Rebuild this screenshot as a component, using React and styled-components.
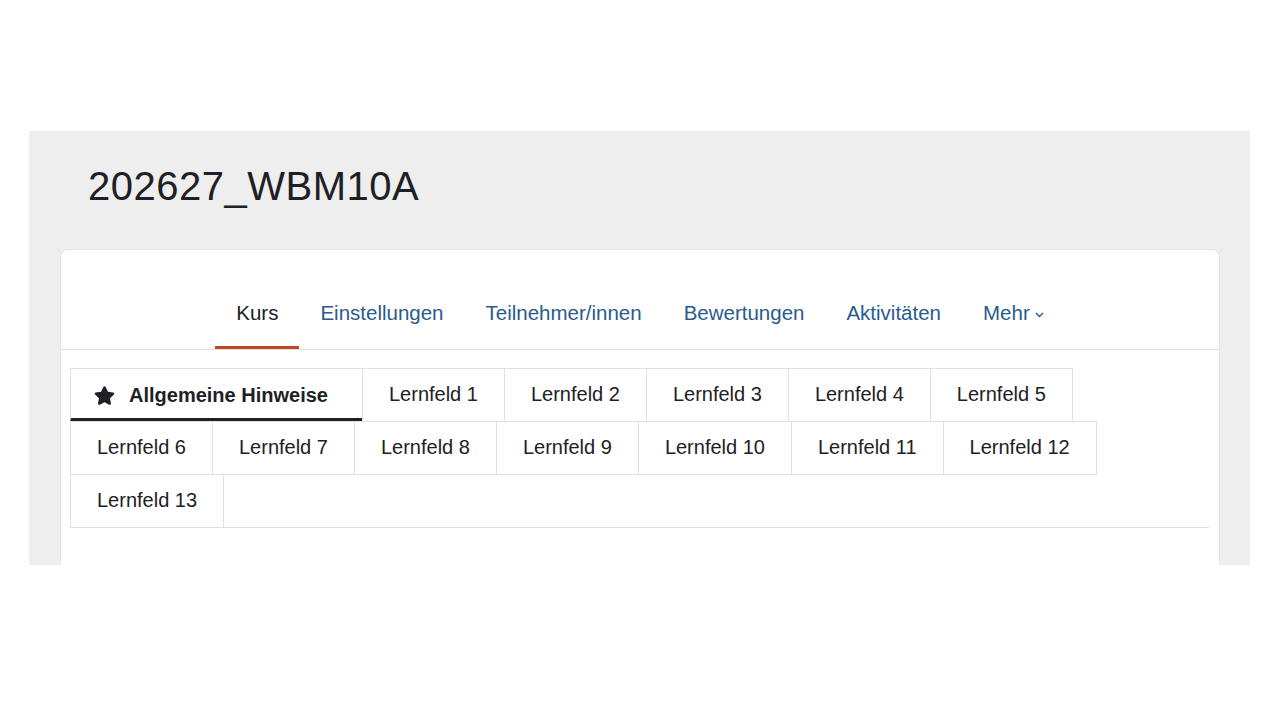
import React from 'react';
import styled, { createGlobalStyle } from 'styled-components';
import { FaStar } from 'react-icons/fa';

const GlobalStyle = createGlobalStyle`
  html, body {
    margin: 0;
    padding: 0;
    background: #fff;
  }
  body {
    font-family: "Liberation Sans", Arial, sans-serif;
    color: #1d2125;
  }
`;

const Page = styled.div`
  padding: 131px 30px 0 29px;
`;

const Panel = styled.section`
  background-color: #eeeeee;
  padding: 32px 30px 0 31px;
`;

const CourseTitle = styled.h1`
  margin: 0 0 39px 28px;
  font-size: 40px;
  line-height: 47px;
  font-weight: 400;
  letter-spacing: 0.5px;
  color: #1d2125;
`;

const Card = styled.div`
  background-color: #fff;
  border: 1px solid #e4e4e4;
  border-bottom: none;
  border-radius: 8px 8px 0 0;
  padding-top: 28px;
`;

const NavBar = styled.nav`
  display: flex;
  justify-content: center;
  border-bottom: 1px solid #dee2e6;
`;

const NavItem = styled.a`
  display: flex;
  align-items: center;
  gap: 5px;
  padding: 20px 21px 18px;
  font-size: 20.5px;
  line-height: 30px;
  color: ${(p) => (p.$active ? '#1d2125' : '#2a5b8e')};
  border-bottom: 3px solid ${(p) => (p.$active ? '#c2461c' : 'transparent')};
  text-decoration: none;
  cursor: pointer;
`;

const Chevron = styled.svg`
  width: 9px;
  height: 6px;
  margin-top: 3px;
`;

const Body = styled.div`
  padding: 18px 10px 37px 9px;
`;

const TabList = styled.ul`
  display: flex;
  flex-wrap: wrap;
  list-style: none;
  margin: 0;
  padding: 0;
  border-bottom: 1px solid #dee2e6;
`;

const Tab = styled.li`
  display: flex;
  align-items: center;
  gap: 14px;
  box-sizing: border-box;
  height: 54px;
  margin: 0 -1px -1px 0;
  padding: ${(p) => (p.$active ? '3px 34px 0 23px' : '0 26px 1px')};
  border: 1px solid #dee2e6;
  border-bottom: ${(p) => (p.$active ? '4px solid #1d2125' : '1px solid #dee2e6')};
  font-size: 20px;
  font-weight: ${(p) => (p.$active ? 700 : 400)};
  color: #1d2125;
  white-space: nowrap;
  cursor: pointer;
`;

const navItems = ['Kurs', 'Einstellungen', 'Teilnehmer/innen', 'Bewertungen', 'Aktivitäten'];
const sections = Array.from({ length: 13 }, (_, i) => `Lernfeld ${i + 1}`);

const App = () => (
  <>
    <GlobalStyle />
    <Page>
      <Panel>
        <CourseTitle>202627_WBM10A</CourseTitle>
        <Card>
          <NavBar>
            {navItems.map((item, i) => (
              <NavItem key={item} $active={i === 0}>{item}</NavItem>
            ))}
            <NavItem>
              Mehr
              <Chevron viewBox="0 0 9 6" fill="none">
                <polyline points="1,1 4.5,4.5 8,1" stroke="#2a5b8e" strokeWidth="1.4" />
              </Chevron>
            </NavItem>
          </NavBar>
          <Body>
            <TabList>
              <Tab $active>
                <FaStar size={21} />
                Allgemeine Hinweise
              </Tab>
              {sections.map((s) => (
                <Tab key={s}>{s}</Tab>
              ))}
            </TabList>
          </Body>
        </Card>
      </Panel>
    </Page>
  </>
);

export default App;
